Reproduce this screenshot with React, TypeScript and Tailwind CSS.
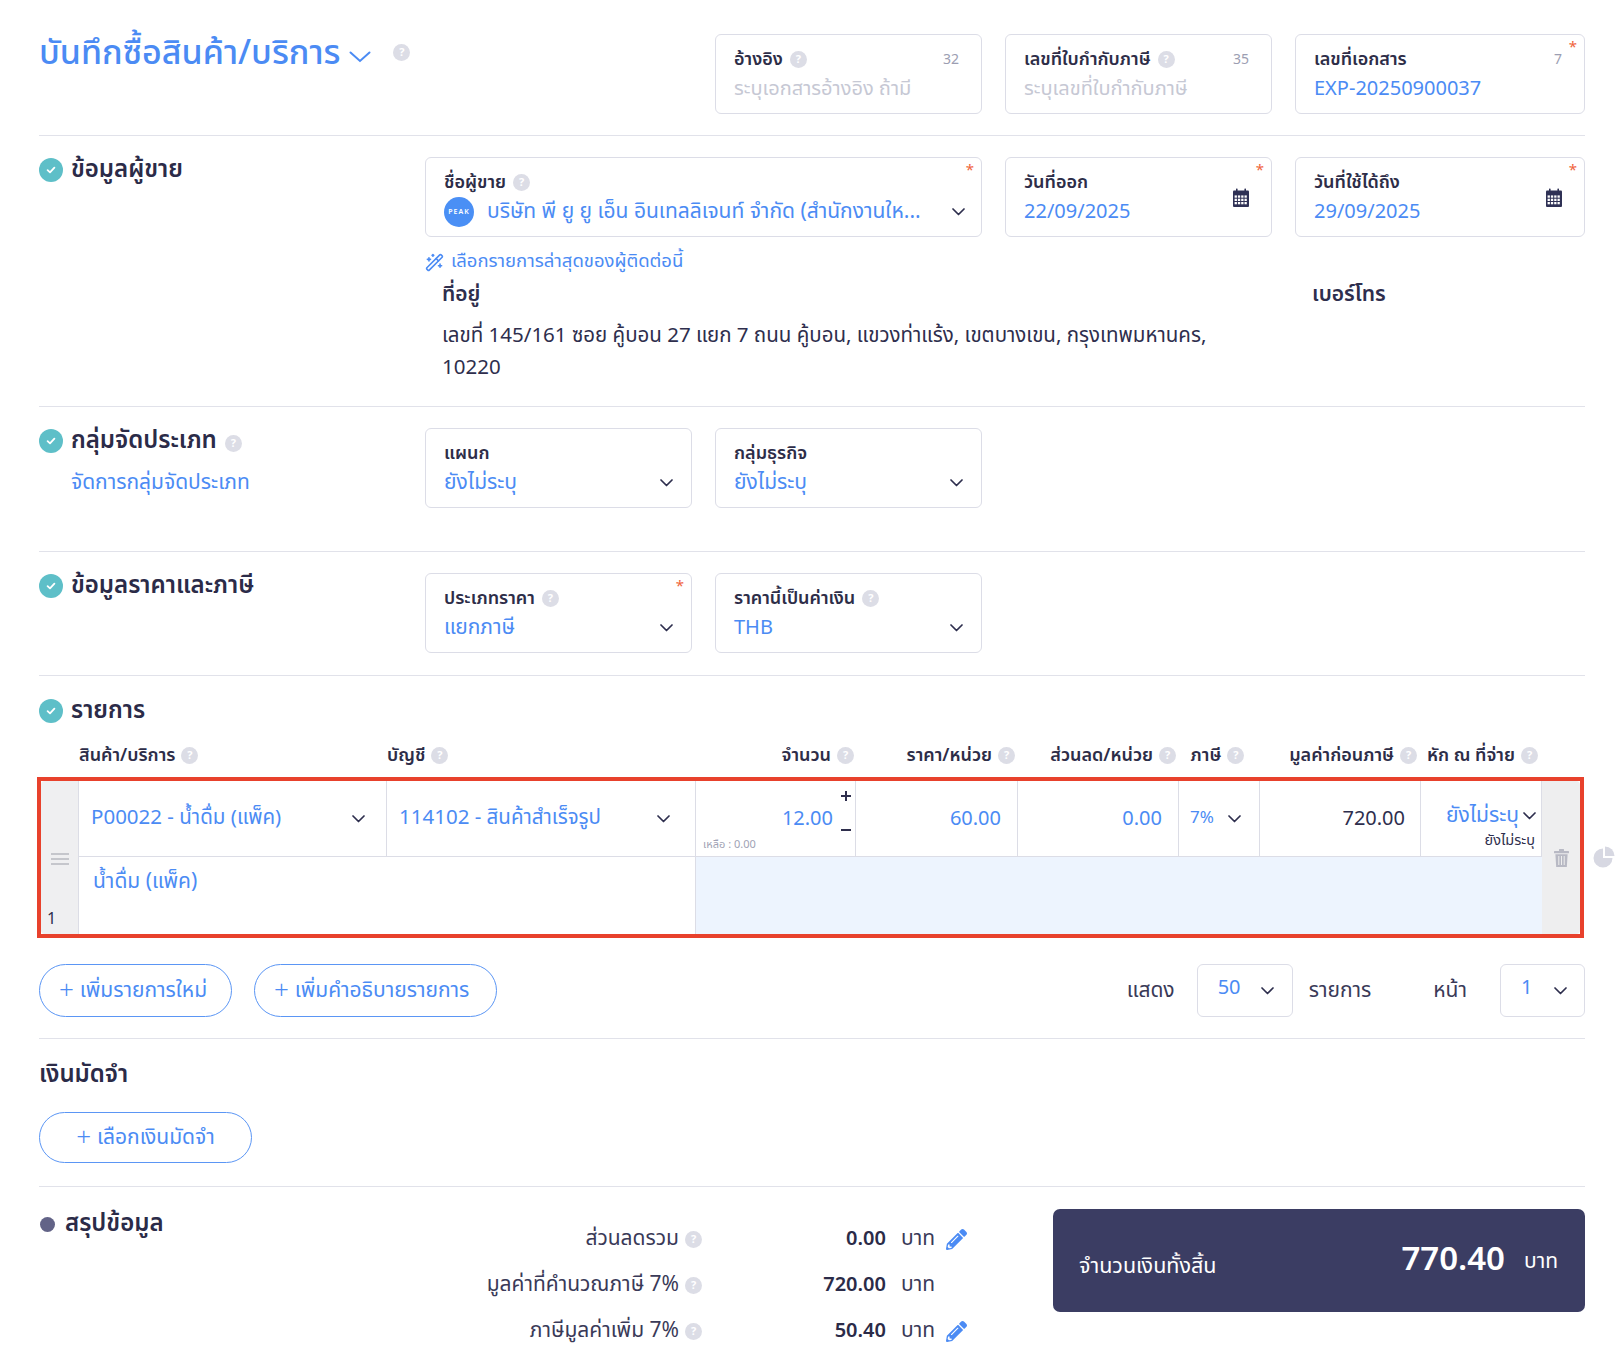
import React from "react";
import { WandSparkles } from "lucide-react";
import { FaPencilAlt } from "react-icons/fa";

const BLUE = "text-[#4b8bf4]";

function Help({ className = "" }: { className?: string }) {
  return (
    <span
      className={
        "inline-flex items-center justify-center w-[17px] h-[17px] rounded-full bg-[#dcdde6] text-white text-[11px] font-bold leading-none shrink-0 " +
        className
      }
    >
      ?
    </span>
  );
}

function Check() {
  return (
    <span className="w-[24px] h-[24px] rounded-full bg-[#5ebfc8] flex items-center justify-center shrink-0">
      <svg width="12" height="12" viewBox="0 0 12 12">
        <path d="M2.6 6.2 L5 8.4 L9.4 3.6" stroke="white" strokeWidth="1.8" fill="none" strokeLinecap="round" strokeLinejoin="round" />
      </svg>
    </span>
  );
}

function Chevron({ className = "", color = "#2e2f4e" }: { className?: string; color?: string }) {
  return (
    <svg width="13" height="8" viewBox="0 0 13 8" className={"shrink-0 " + className}>
      <path d="M1 1 L6.5 6.5 L12 1" stroke={color} strokeWidth="1.7" fill="none" strokeLinecap="round" strokeLinejoin="round" />
    </svg>
  );
}

function CalendarIcon() {
  const cells = [];
  for (let r = 0; r < 3; r++) {
    for (let c = 0; c < 4; c++) {
      cells.push(<rect key={r + "-" + c} x={1.6 + c * 3.3} y={7.4 + r * 3.3} width="2.3" height="2.3" fill="white" />);
    }
  }
  return (
    <svg width="16" height="19" viewBox="0 0 16 19">
      <rect x="3" y="0.5" width="1.6" height="3" rx="0.6" fill="#2f3155" />
      <rect x="11.4" y="0.5" width="1.6" height="3" rx="0.6" fill="#2f3155" />
      <rect x="0" y="2.5" width="16" height="16.5" rx="1" fill="#2f3155" />
      {cells}
    </svg>
  );
}

function TrashIcon() {
  return (
    <svg width="15" height="18" viewBox="0 0 15 18">
      <rect x="5" y="0" width="5" height="2" rx="0.5" fill="#b8b9c4" />
      <rect x="0" y="2" width="15" height="2.2" rx="0.5" fill="#b8b9c4" />
      <path d="M1.4 5.2 H13.6 L12.8 18 H2.2 Z" fill="#b8b9c4" />
      <rect x="4.3" y="7" width="1" height="9" fill="#eeeeee" />
      <rect x="7" y="7" width="1" height="9" fill="#eeeeee" />
      <rect x="9.7" y="7" width="1" height="9" fill="#eeeeee" />
    </svg>
  );
}

function PieIcon() {
  return (
    <svg width="24" height="22" viewBox="0 0 24 22">
      <path d="M10 2.5 A9.5 9.5 0 1 0 19.5 12 H10 Z" fill="#d7d8e2" />
      <path d="M12 0.5 A9.5 9.5 0 0 1 21.5 10 H12 Z" fill="#d7d8e2" />
    </svg>
  );
}

function Field({
  label,
  help,
  count,
  required,
  children,
  calendar,
}: {
  label: string;
  help?: boolean;
  count?: string;
  required?: boolean;
  children?: React.ReactNode;
  calendar?: boolean;
}) {
  return (
    <div className="relative h-[80px] rounded-[6px] border border-[#dcdde7] bg-white pl-[18px] pr-[16px] pt-[12px]">
      <div className="flex items-center h-[24px] text-[18px] font-semibold text-[#2d2d48]">
        <span>{label}</span>
        {help && <Help className="ml-[7px]" />}
        {count && <span className="ml-auto mr-[6px] text-[14px] font-normal text-[#9c9eb2]">{count}</span>}
      </div>
      <div className="mt-[4px] h-[28px] flex items-center">{children}</div>
      {required && <span className="absolute right-[7px] top-[5px] text-[#f0643c] text-[15px] leading-none">*</span>}
      {calendar && (
        <span className="absolute right-[22px] top-[30px]">
          <CalendarIcon />
        </span>
      )}
    </div>
  );
}

function SectionHeading({ text, help }: { text: string; help?: boolean }) {
  return (
    <div className="flex items-center gap-[8px] h-[26px]">
      <Check />
      <span className="text-[24px] font-semibold text-[#2b2b48] leading-none">{text}</span>
      {help && <Help className="mt-[4px]" />}
    </div>
  );
}

const COLS = "grid-cols-[38px_308px_309px_160px_162px_161px_81px_161px_121px_38px]";

export default function App() {
  return (
    <div className="w-[1624px] bg-white font-['Noto_Sans_Thai','Noto_Sans',sans-serif] text-[#2e2e4d]">
      <div className="px-[39px]">
        {/* Header */}
        <div className="flex pt-[34px] pb-[21px] border-b border-[#e1e2ea]">
          <div className="w-[676px] flex items-center h-[40px]">
            <span className={"text-[34px] font-medium leading-none " + BLUE}>บันทึกซื้อสินค้า/บริการ</span>
            <svg width="22" height="12" viewBox="0 0 22 12" className="ml-[9px] mt-[6px]">
              <path d="M1.5 1.5 L11 10 L20.5 1.5" stroke="#4b8bf4" strokeWidth="2" fill="none" strokeLinecap="round" />
            </svg>
            <Help className="ml-[22px] mt-[-4px]" />
          </div>
          <div className="flex-1 grid grid-cols-[267px_267px_1fr] gap-x-[23px]">
            <Field label="อ้างอิง" help count="32">
              <span className="text-[20px] text-[#c6c8d4]">ระบุเอกสารอ้างอิง ถ้ามี</span>
            </Field>
            <Field label="เลขที่ใบกำกับภาษี" help count="35">
              <span className="text-[20px] text-[#c6c8d4]">ระบุเลขที่ใบกำกับภาษี</span>
            </Field>
            <Field label="เลขที่เอกสาร" count="7" required>
              <span className={"text-[20px] " + BLUE}>EXP-20250900037</span>
            </Field>
          </div>
        </div>

        {/* Vendor section */}
        <div className="flex pt-[21px] pb-[22px] border-b border-[#e1e2ea]">
          <div className="w-[386px]">
            <SectionHeading text="ข้อมูลผู้ขาย" />
          </div>
          <div className="flex-1 grid grid-cols-[267px_267px_267px_1fr] gap-x-[23px]">
            <div className="col-span-2">
              <Field label="ชื่อผู้ขาย" help required>
                <div className="flex items-center w-full">
                  <div className="w-[30px] h-[30px] rounded-full bg-[#4a8ff5] flex items-center justify-center text-white text-[7px] font-semibold tracking-[1px] shrink-0">
                    PEAK
                  </div>
                  <span className={"ml-[13px] text-[21px] truncate " + BLUE}>
                    บริษัท พี ยู ยู เอ็น อินเทลลิเจนท์ จำกัด (สำนักงานให...
                  </span>
                  <Chevron className="ml-auto" />
                </div>
              </Field>
            </div>
            <Field label="วันที่ออก" required calendar>
              <span className={"text-[20px] " + BLUE}>22/09/2025</span>
            </Field>
            <Field label="วันที่ใช้ได้ถึง" required calendar>
              <span className={"text-[20px] " + BLUE}>29/09/2025</span>
            </Field>

            <div className="col-span-4 mt-[13px] flex items-center h-[24px]">
              <WandSparkles size={19} color="#4b8bf4" strokeWidth={2} />
              <span className={"ml-[7px] text-[18.5px] " + BLUE}>เลือกรายการล่าสุดของผู้ติดต่อนี้</span>
            </div>
            <div className="col-span-3 mt-[9px] pl-[17px] text-[21px] font-semibold h-[24px] leading-[24px]">ที่อยู่</div>
            <div className="mt-[9px] pl-[17px] text-[21px] font-semibold h-[24px] leading-[24px]">เบอร์โทร</div>
            <div className="col-span-3 mt-[13px] pl-[17px] text-[20.5px] leading-[32px] text-[#2e2e4d] whitespace-nowrap">
              เลขที่ 145/161 ซอย คู้บอน 27 แยก 7 ถนน คู้บอน, แขวงท่าแร้ง, เขตบางเขน, กรุงเทพมหานคร,
              <br />
              10220
            </div>
          </div>
        </div>

        {/* Classification */}
        <div className="flex pt-[21px] pb-[43px] border-b border-[#e1e2ea]">
          <div className="w-[386px]">
            <SectionHeading text="กลุ่มจัดประเภท" help />
            <div className={"ml-[32px] mt-[13px] text-[21px] " + BLUE}>จัดการกลุ่มจัดประเภท</div>
          </div>
          <div className="flex-1 grid grid-cols-[267px_267px_267px_1fr] gap-x-[23px]">
            <Field label="แผนก">
              <div className="flex items-center w-full">
                <span className={"text-[21px] " + BLUE}>ยังไม่ระบุ</span>
                <Chevron className="ml-auto mr-[2px]" />
              </div>
            </Field>
            <Field label="กลุ่มธุรกิจ">
              <div className="flex items-center w-full">
                <span className={"text-[21px] " + BLUE}>ยังไม่ระบุ</span>
                <Chevron className="ml-auto mr-[2px]" />
              </div>
            </Field>
          </div>
        </div>

        {/* Price and tax */}
        <div className="flex pt-[21px] pb-[22px] border-b border-[#e1e2ea]">
          <div className="w-[386px]">
            <SectionHeading text="ข้อมูลราคาและภาษี" />
          </div>
          <div className="flex-1 grid grid-cols-[267px_267px_267px_1fr] gap-x-[23px]">
            <Field label="ประเภทราคา" help required>
              <div className="flex items-center w-full">
                <span className={"text-[21px] " + BLUE}>แยกภาษี</span>
                <Chevron className="ml-auto mr-[2px]" />
              </div>
            </Field>
            <Field label="ราคานี้เป็นค่าเงิน" help>
              <div className="flex items-center w-full">
                <span className={"text-[20px] " + BLUE}>THB</span>
                <Chevron className="ml-auto mr-[2px]" />
              </div>
            </Field>
          </div>
        </div>

        {/* Items */}
        <div className="pt-[22px] pb-[21px] border-b border-[#e1e2ea]">
          <SectionHeading text="รายการ" />
          <div className={"grid ml-[2px] mt-[18px] h-[24px] items-center text-[18px] font-semibold text-[#2d2d48] " + COLS}>
            <div />
            <div className="flex items-center gap-[6px]">สินค้า/บริการ <Help /></div>
            <div className="flex items-center gap-[6px]">บัญชี <Help /></div>
            <div className="flex items-center justify-end gap-[6px] pr-[2px] whitespace-nowrap">จำนวน <Help /></div>
            <div className="flex items-center justify-end gap-[6px] pr-[3px] whitespace-nowrap">ราคา/หน่วย <Help /></div>
            <div className="flex items-center justify-end gap-[6px] pr-[3px] whitespace-nowrap">ส่วนลด/หน่วย <Help /></div>
            <div className="flex items-center justify-center gap-[6px] pr-[4px] whitespace-nowrap">ภาษี <Help /></div>
            <div className="flex items-center justify-end gap-[6px] pr-[4px] whitespace-nowrap">มูลค่าก่อนภาษี <Help /></div>
            <div className="flex items-center justify-end gap-[6px] pr-[4px] whitespace-nowrap">หัก ณ ที่จ่าย <Help /></div>
            <div />
          </div>

          <div className="relative mt-[11px] ml-[-2px] w-[1547px] border-4 border-[#e8412c]">
            <div className={"grid grid-rows-[76px_77px] rounded-[4px] overflow-hidden " + COLS}>
              {/* drag */}
              <div className="row-span-2 bg-[#efeff1] border-r border-[#dcdde6] relative flex items-center justify-center">
                <svg width="18" height="14" viewBox="0 0 18 14" className="mt-[2px]">
                  <rect x="0" y="1" width="18" height="2" fill="#c5c6cc" />
                  <rect x="0" y="6" width="18" height="2" fill="#c5c6cc" />
                  <rect x="0" y="11" width="18" height="2" fill="#c5c6cc" />
                </svg>
                <span className="absolute left-[6px] bottom-[3px] text-[16px] text-[#2e2e4d]">1</span>
              </div>
              {/* product */}
              <div className="border-r border-b border-[#dcdde6] flex items-center pl-[12px] pr-[21px]">
                <span className={"text-[20.5px] " + BLUE}>P00022 - น้ำดื่ม (แพ็ค)</span>
                <Chevron className="ml-auto" />
              </div>
              {/* account */}
              <div className="border-r border-b border-[#dcdde6] flex items-center pl-[12px] pr-[25px]">
                <span className={"text-[20.5px] " + BLUE}>114102 - สินค้าสำเร็จรูป</span>
                <Chevron className="ml-auto" />
              </div>
              {/* qty */}
              <div className="relative border-r border-b border-[#dcdde6]">
                <span className={"absolute right-[22px] top-[24px] text-[20px] leading-[28px] " + BLUE}>12.00</span>
                <span className="absolute right-[4px] top-[10px] w-[10px] h-[10px]">
                  <span className="absolute left-0 top-[4px] w-[10px] h-[1.6px] bg-[#2e2e4d]" />
                  <span className="absolute left-[4.2px] top-0 w-[1.6px] h-[10px] bg-[#2e2e4d]" />
                </span>
                <span className="absolute right-[4px] top-[48px] w-[10px] h-[1.6px] bg-[#2e2e4d]" />
                <span className="absolute left-[7px] bottom-[3px] text-[11px] text-[#a0a2b4]">เหลือ : 0.00</span>
              </div>
              {/* price */}
              <div className="border-r border-b border-[#dcdde6] flex items-center justify-end pr-[16px]">
                <span className={"text-[20px] " + BLUE}>60.00</span>
              </div>
              {/* discount */}
              <div className="border-r border-b border-[#dcdde6] flex items-center justify-end pr-[16px]">
                <span className={"text-[20px] " + BLUE}>0.00</span>
              </div>
              {/* tax */}
              <div className="border-r border-b border-[#dcdde6] flex items-center pl-[11px] pr-[18px]">
                <span className={"text-[17px] " + BLUE}>7%</span>
                <Chevron className="ml-auto" />
              </div>
              {/* pretax */}
              <div className="border-r border-b border-[#dcdde6] flex items-center justify-end pr-[15px]">
                <span className="text-[20px] text-[#2e2e4d]">720.00</span>
              </div>
              {/* wht */}
              <div className="relative border-r border-b border-[#dcdde6]">
                <div className="absolute right-[5px] top-[19px] flex items-center">
                  <span className={"text-[21px] " + BLUE}>ยังไม่ระบุ</span>
                  <Chevron className="ml-[4px]" />
                </div>
                <span className="absolute right-[6px] top-[50px] text-[14.5px] text-[#2e2e4d]">ยังไม่ระบุ</span>
              </div>
              {/* trash */}
              <div className="row-span-2 bg-[#eeeeef] flex items-center justify-center">
                <TrashIcon />
              </div>
              {/* description */}
              <div className="col-span-2 border-r border-[#dcdde6] pl-[14px] pt-[9px]">
                <span className={"text-[21px] " + BLUE}>น้ำดื่ม (แพ็ค)</span>
              </div>
              <div className="col-span-6 bg-[#edf4fe]" />
            </div>
            <span className="absolute right-[-37px] top-[65px]">
              <PieIcon />
            </span>
          </div>

          <div className="flex items-center mt-[26px]">
            <button className="h-[53px] w-[193px] rounded-full border border-[#5b96f5] flex items-center pl-[19px] text-[21px] text-[#4b8bf4] whitespace-nowrap">
              <span className="text-[26px] font-light mr-[6px] leading-none">+</span>เพิ่มรายการใหม่
            </button>
            <button className="ml-[22px] h-[53px] w-[243px] rounded-full border border-[#5b96f5] flex items-center pl-[19px] text-[21px] text-[#4b8bf4] whitespace-nowrap">
              <span className="text-[26px] font-light mr-[6px] leading-none">+</span>เพิ่มคำอธิบายรายการ
            </button>
            <div className="ml-auto flex items-center text-[21px] text-[#3a3a58]">
              <span>แสดง</span>
              <div className="ml-[22px] h-[53px] w-[96px] rounded-[6px] border border-[#dcdde7] flex items-center pl-[20px] pr-[18px]">
                <span className="text-[20px] text-[#4b8bf4] mt-[-6px]">50</span>
                <Chevron className="ml-auto" />
              </div>
              <span className="ml-[16px]">รายการ</span>
              <span className="ml-[62px]">หน้า</span>
              <div className="ml-[33px] h-[53px] w-[85px] rounded-[6px] border border-[#dcdde7] flex items-center pl-[20px] pr-[17px]">
                <span className="text-[20px] text-[#4b8bf4] mt-[-6px]">1</span>
                <Chevron className="ml-auto" />
              </div>
            </div>
          </div>
        </div>

        {/* Deposit */}
        <div className="pt-[21px] pb-[23px] border-b border-[#e1e2ea]">
          <div className="text-[24px] font-semibold text-[#2b2b48] leading-[30px]">เงินมัดจำ</div>
          <button className="mt-[22px] h-[51px] w-[213px] rounded-full border border-[#5b96f5] flex items-center justify-center text-[21px] text-[#4b8bf4]">
            <span className="text-[26px] font-light mr-[6px] leading-none">+</span>เลือกเงินมัดจำ
          </button>
        </div>

        {/* Summary */}
        <div className="flex pt-[22px] pb-[60px]">
          <div className="w-[386px] flex items-center gap-[10px] h-[26px] mt-[2px]">
            <span className="w-[15px] h-[15px] rounded-full bg-[#626387] ml-[1px]" />
            <span className="text-[24px] font-semibold text-[#2b2b48] leading-none">สรุปข้อมูล</span>
          </div>
          <div className="grid grid-cols-[277px_184px_60px_24px] auto-rows-[46px] items-center mt-[7px] text-[21px]">
            <div className="flex items-center justify-end gap-[6px] text-[#3a3a58]">ส่วนลดรวม <Help /></div>
            <div className="text-right text-[20px] font-semibold text-[#2b2b48]">0.00</div>
            <div className="pl-[15px] text-[#3a3a58]">บาท</div>
            <div><FaPencilAlt size={21} color="#4b8bf4" /></div>

            <div className="flex items-center justify-end gap-[6px] text-[#3a3a58] whitespace-nowrap">มูลค่าที่คำนวณภาษี 7% <Help /></div>
            <div className="text-right text-[20px] font-semibold text-[#2b2b48]">720.00</div>
            <div className="pl-[15px] text-[#3a3a58]">บาท</div>
            <div />

            <div className="flex items-center justify-end gap-[6px] text-[#3a3a58] whitespace-nowrap">ภาษีมูลค่าเพิ่ม 7% <Help /></div>
            <div className="text-right text-[20px] font-semibold text-[#2b2b48]">50.40</div>
            <div className="pl-[15px] text-[#3a3a58]">บาท</div>
            <div><FaPencilAlt size={21} color="#4b8bf4" /></div>
          </div>
          <div className="ml-auto w-[532px] h-[103px] rounded-[7px] bg-[#3b3d63] flex items-center pl-[26px] pr-[27px] text-white">
            <span className="text-[21.5px] mt-[14px]">จำนวนเงินทั้งสิ้น</span>
            <span className="ml-auto text-[33px] font-semibold">770.40</span>
            <span className="ml-[19px] text-[21px] mt-[2px]">บาท</span>
          </div>
        </div>
      </div>
    </div>
  );
}
